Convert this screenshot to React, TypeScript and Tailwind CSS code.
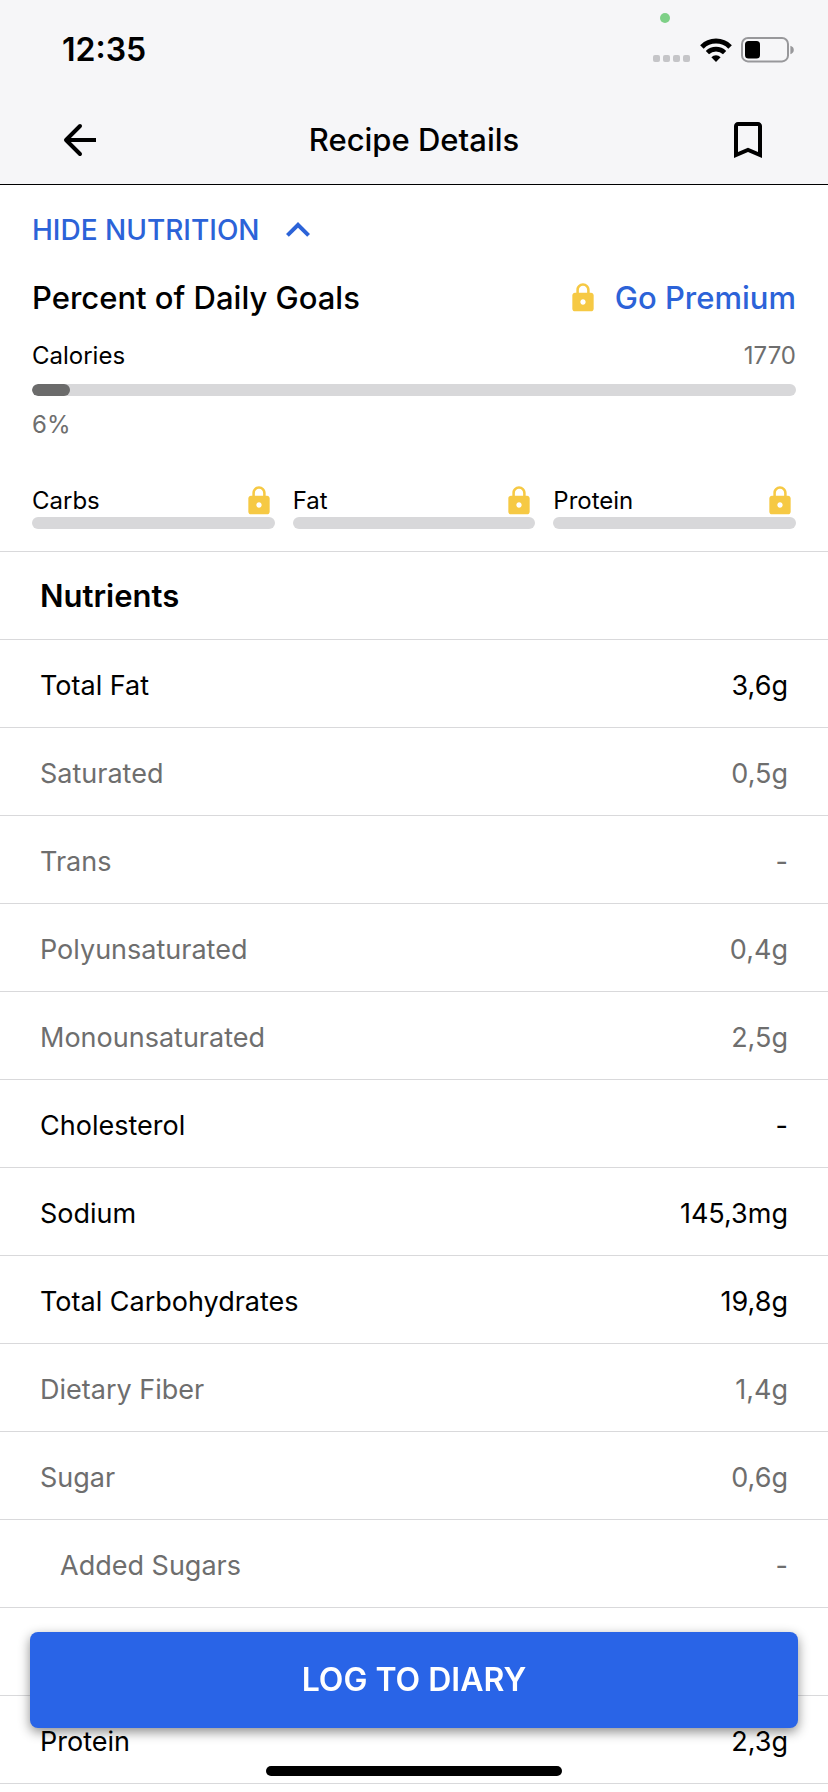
import { useState } from 'react';
import clsx from 'clsx';
import { MdBookmarkBorder, MdKeyboardArrowDown, MdKeyboardArrowUp, MdLock } from 'react-icons/md';

interface Nutrient {
  name: string;
  value: string;
  level: 'main' | 'sub' | 'nested';
}

const nutrients: Nutrient[] = [
  { name: 'Total Fat', value: '3,6g', level: 'main' },
  { name: 'Saturated', value: '0,5g', level: 'sub' },
  { name: 'Trans', value: '-', level: 'sub' },
  { name: 'Polyunsaturated', value: '0,4g', level: 'sub' },
  { name: 'Monounsaturated', value: '2,5g', level: 'sub' },
  { name: 'Cholesterol', value: '-', level: 'main' },
  { name: 'Sodium', value: '145,3mg', level: 'main' },
  { name: 'Total Carbohydrates', value: '19,8g', level: 'main' },
  { name: 'Dietary Fiber', value: '1,4g', level: 'sub' },
  { name: 'Sugar', value: '0,6g', level: 'sub' },
  { name: 'Added Sugars', value: '-', level: 'nested' },
  { name: '', value: '', level: 'main' },
  { name: 'Protein', value: '2,3g', level: 'main' },
];

const lockedGoals = ['Carbs', 'Fat', 'Protein'];

function StatusBar() {
  return (
    <div className="relative flex h-24 items-center justify-between pt-1 pr-[34px] pl-[62px]">
      <span className="text-[32px] leading-10 font-semibold">12:35</span>
      <div className="flex items-center">
        <svg className="mr-[9px] h-6 w-[38px]" viewBox="0 0 38 24" fill="#c5c5c8">
          <rect x="0" y="17" width="7" height="7" rx="2" />
          <rect x="10" y="17" width="7" height="7" rx="2" />
          <rect x="20" y="17" width="7" height="7" rx="2" />
          <rect x="30" y="17" width="7" height="7" rx="2" />
        </svg>
        <svg className="mr-[9px] h-6 w-8" viewBox="0 0 32 24">
          <path d="M1.9 8.9a20 20 0 0 1 28.2 0" fill="none" stroke="#000" strokeWidth="5" />
          <path d="M7.4 14.6a12.3 12.3 0 0 1 17.2 0" fill="none" stroke="#000" strokeWidth="4.6" />
          <path d="M11.4 19.2a6.6 6.6 0 0 1 9.2 0L16 24z" fill="#000" />
        </svg>
        <svg className="h-[26px] w-[53px]" viewBox="0 0 53 26">
          <rect x="1" y="1" width="46" height="23.4" rx="6" fill="none" stroke="#98989b" strokeWidth="2" />
          <rect x="4" y="4" width="15" height="17.4" rx="3.5" fill="#000" />
          <path d="M49.4 8.8c2.2.6 3.4 2.2 3.4 4.2s-1.2 3.6-3.4 4.2z" fill="#98989b" />
        </svg>
      </div>
      <span className="absolute top-[13px] right-[158px] size-[10px] rounded-full bg-[#7ed087]" />
    </div>
  );
}

function LockIcon() {
  return <MdLock className="size-8 text-[#f6c944]" aria-hidden="true" />;
}

export default function App() {
  const [open, setOpen] = useState(true);

  return (
    <div className="min-h-screen bg-white font-['Inter','Liberation_Sans',sans-serif] text-black">
      <header className="border-b border-black bg-[#f6f6f8]">
        <StatusBar />
        <div className="flex h-22 items-center justify-between px-14">
          <button type="button" aria-label="Back" className="size-12">
            <svg className="size-12" viewBox="0 0 24 24" fill="none" stroke="currentColor" strokeWidth="2">
              <path d="M20 12H5.5" />
              <path d="M12 5l-7 7 7 7" strokeLinecap="round" strokeLinejoin="round" />
            </svg>
          </button>
          <h1 className="text-[31px] leading-10 font-medium">Recipe Details</h1>
          <button type="button" aria-label="Bookmark" className="size-12">
            <MdBookmarkBorder className="size-12" />
          </button>
        </div>
      </header>

      <main>
        <section className="px-8 pt-[21px] pb-[22px]">
          <button
            type="button"
            aria-expanded={open}
            onClick={() => setOpen(!open)}
            className="flex h-12 items-center gap-[14px] text-[28px] leading-8 font-medium text-[#2c63d8]"
          >
            {open ? 'HIDE NUTRITION' : 'SHOW NUTRITION'}
            {open ? <MdKeyboardArrowUp className="size-12" /> : <MdKeyboardArrowDown className="size-12" />}
          </button>

          <div className="mt-6 flex h-10 items-center justify-between">
            <h2 className="text-[31px] leading-10 font-medium">Percent of Daily Goals</h2>
            <a href="#premium" className="flex items-center gap-4 text-[31px] leading-10 font-medium text-[#2c63d8]">
              <LockIcon />
              Go Premium
            </a>
          </div>

          <div className="mt-[22px] flex justify-between text-[24px] leading-8">
            <span>Calories</span>
            <span className="text-[#6e6e6e]">1770</span>
          </div>
          <div className="mt-3 h-3 overflow-hidden rounded-full bg-[#d8d8da]">
            <div className="h-full w-[5%] rounded-full bg-[#6b6b6b]" />
          </div>
          <p className="mt-[13px] text-[24px] leading-8 text-[#6e6e6e]">6%</p>

          <div className="mt-11 grid grid-cols-3 gap-[18px]">
            {lockedGoals.map((goal) => (
              <div key={goal}>
                <div className="flex items-center justify-between text-[24px] leading-8">
                  {goal}
                  <LockIcon />
                </div>
                <div className="h-3 rounded-full bg-[#d8d8da]" />
              </div>
            ))}
          </div>
        </section>

        {open && (
          <table className="w-full border-separate border-spacing-0">
            <thead>
              <tr>
                <th
                  colSpan={2}
                  scope="colgroup"
                  className="h-[89px] border-y border-[#d9d9db] px-10 text-left text-[31px] leading-10 font-semibold"
                >
                  Nutrients
                </th>
              </tr>
            </thead>
            <tbody>
              {nutrients.map(({ name, value, level }, i) => (
                <tr key={i} className={clsx('text-[27px] leading-9', level !== 'main' && 'text-[#6e6e6e]')}>
                  <th
                    scope="row"
                    className={clsx(
                      'h-22 border-b border-[#d9d9db] pt-1 text-left font-normal',
                      level === 'nested' ? 'pl-15' : 'pl-10',
                    )}
                  >
                    {name}
                  </th>
                  <td className="h-22 border-b border-[#d9d9db] pt-1 pr-10 text-right">{value}</td>
                </tr>
              ))}
            </tbody>
          </table>
        )}
      </main>

      <div className="fixed inset-x-0 bottom-0 flex flex-col items-center px-[30px] pb-4">
        <button
          type="button"
          className="h-24 w-full rounded-lg bg-[#2964e7] text-[32px] leading-10 font-semibold text-white shadow-[0_4px_12px_rgba(0,0,0,0.45)]"
        >
          LOG TO DIARY
        </button>
        <div className="mt-[38px] h-[10px] w-[296px] rounded-full bg-black" />
      </div>
    </div>
  );
}
